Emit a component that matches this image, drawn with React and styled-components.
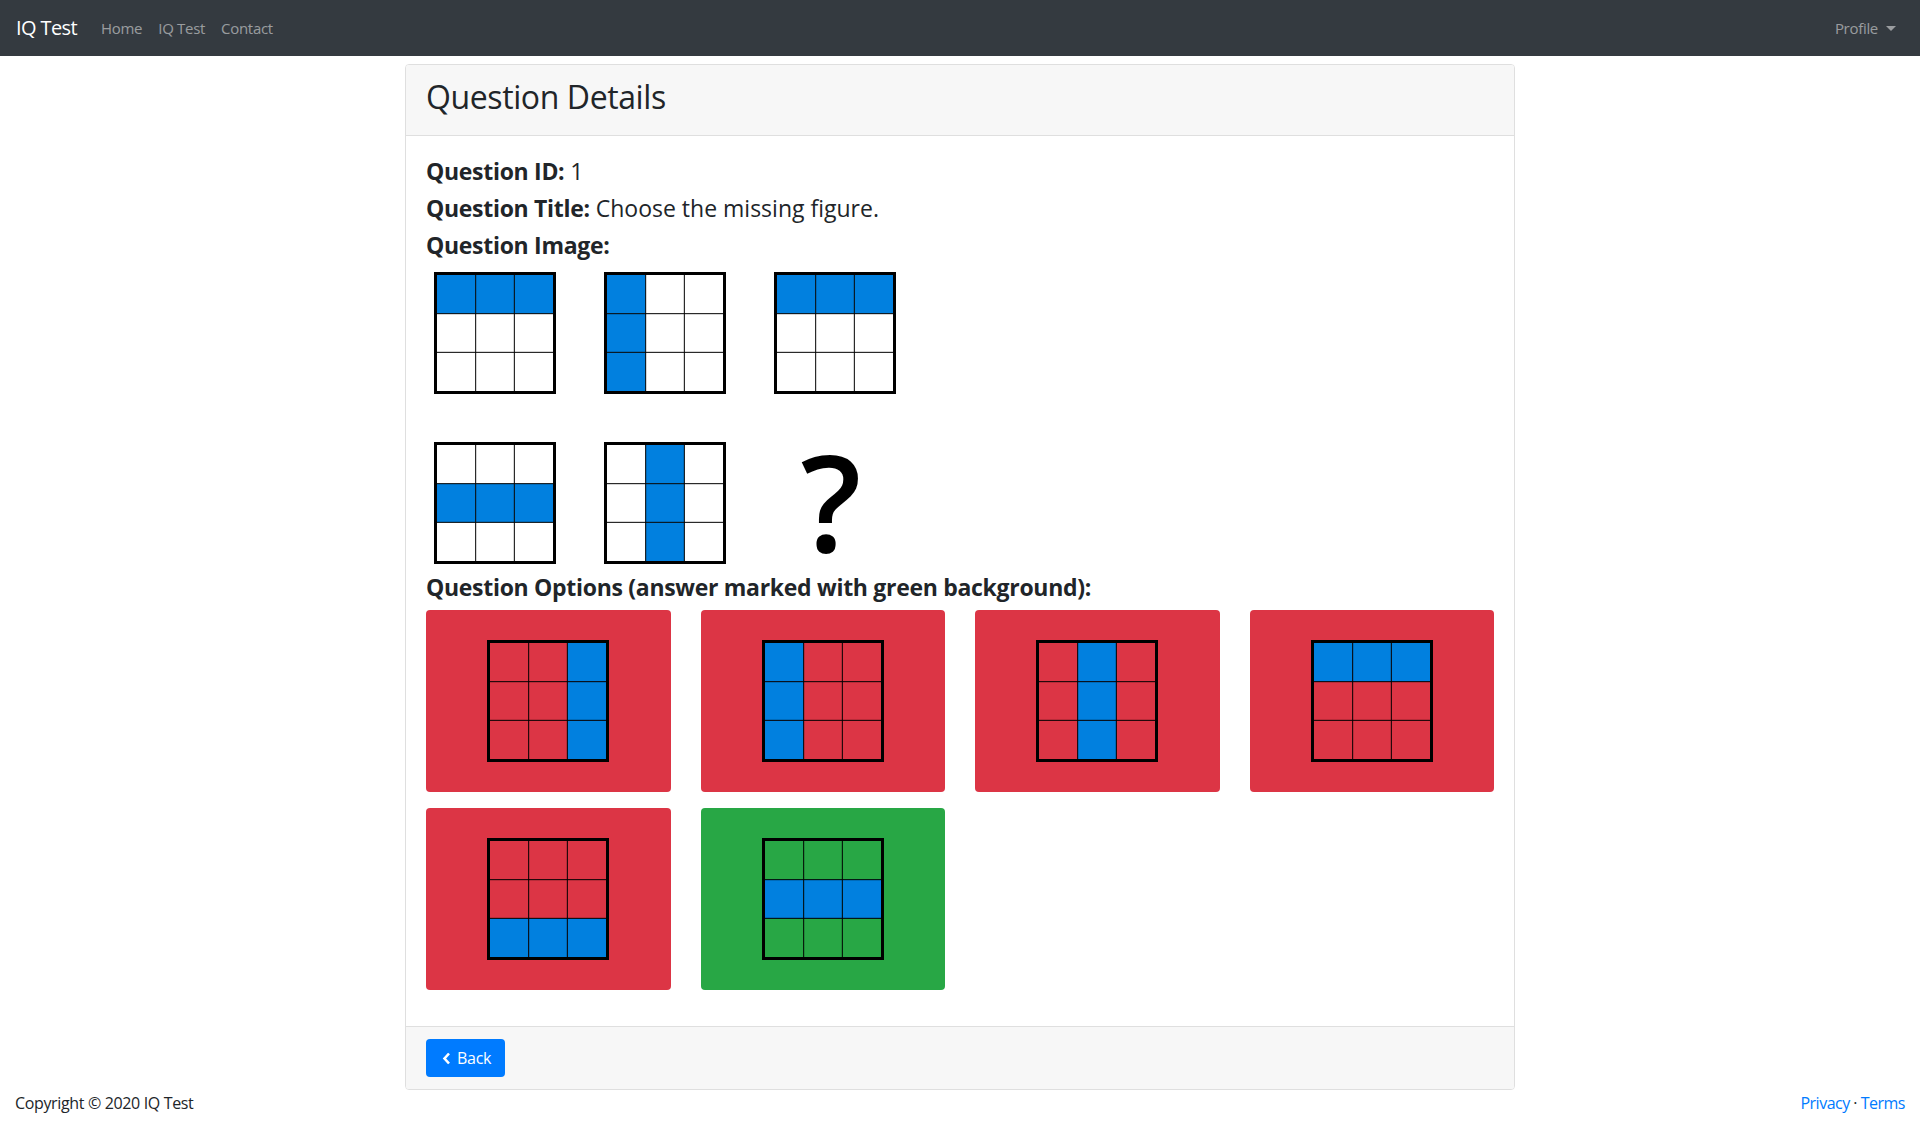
import React from "react";
import styled, { createGlobalStyle } from "styled-components";

const FONT = `"Open Sans", "Noto Sans", "Liberation Sans", sans-serif`;
const BLUE_CELL = "#0180df";

const GlobalStyle = createGlobalStyle`
  html, body {
    margin: 0;
    padding: 0;
    background: #fff;
  }
  body {
    font-family: ${FONT};
    font-size: 16px;
    line-height: 1.5;
    color: #212529;
  }
  * {
    box-sizing: border-box;
  }
`;

const Navbar = styled.nav`
  height: 56px;
  background: #343a40;
  display: flex;
  align-items: center;
  padding: 0 16px;
`;

const Brand = styled.a`
  font-size: 20px;
  color: #fff;
  margin-right: 16px;
  text-decoration: none;
  letter-spacing: -0.6px;
`;

const NavList = styled.div`
  display: flex;
  flex: 1;
`;

const NavLink = styled.a`
  color: rgba(255, 255, 255, 0.5);
  padding: 8px;
  font-size: 15px;
  letter-spacing: -0.3px;
  text-decoration: none;
`;

const Dropdown = styled(NavLink)`
  padding-right: 8px;
  &::after {
    content: "";
    display: inline-block;
    margin-left: 8px;
    vertical-align: 3px;
    border-top: 5px solid rgba(255, 255, 255, 0.5);
    border-left: 5px solid transparent;
    border-right: 5px solid transparent;
  }
`;

const Container = styled.main`
  width: 1140px;
  margin: 8px auto 0;
  padding: 0 15px;
`;

const Card = styled.section`
  border: 1px solid #dfdfdf;
  border-radius: 4px;
  overflow: hidden;
`;

const CardHeader = styled.header`
  background: #f7f7f7;
  border-bottom: 1px solid #dfdfdf;
  padding: 13px 20px 11px;
`;

const Title = styled.h2`
  margin: 0 0 8px;
  font-size: 32px;
  font-weight: 400;
  line-height: 38px;
  letter-spacing: -0.4px;
`;

const CardBody = styled.div`
  padding: 21px 20px 20px;
`;

const InfoLine = styled.h4`
  margin: 0 0 8px;
  font-size: 23px;
  font-weight: 400;
  line-height: 28.8px;
  strong {
    font-weight: 700;
    letter-spacing: -0.3px;
  }
`;

const FigureSet = styled.div`
  display: flex;
  flex-direction: column;
  gap: 48px;
  padding: 5px 8px 9px;
`;

const FigureRow = styled.div`
  display: flex;
  gap: 48px;
`;

const Missing = styled.div`
  width: 122px;
  height: 122px;
  display: flex;
  align-items: center;
  justify-content: center;
  padding: 0 8px 6px 0;
  span {
    font-family: "Open Sans", "Liberation Sans", sans-serif;
    font-weight: 600;
    font-size: 134px;
    line-height: 110px;
    color: #000;
  }
`;

const Options = styled.div`
  display: grid;
  grid-template-columns: repeat(4, 1fr);
  column-gap: 30px;
`;

const Option = styled.div`
  background: ${(p) => (p.$correct ? "#28a745" : "#dc3545")};
  border-radius: 4px;
  padding: 30px;
  margin-bottom: 16px;
  display: flex;
  justify-content: center;
`;

const CardFooter = styled.footer`
  background: #f7f7f7;
  border-top: 1px solid #dfdfdf;
  padding: 12px 20px;
`;

const Button = styled.a`
  display: inline-flex;
  align-items: center;
  gap: 6px;
  height: 38px;
  padding: 0 14px 0 16px;
  background: #007bff;
  color: #fff;
  border-radius: 4px;
  font-size: 16px;
  letter-spacing: -0.3px;
  text-decoration: none;
`;

const PageFooter = styled.footer`
  display: flex;
  justify-content: space-between;
  align-items: center;
  padding: 0 15px;
  height: 24px;
  margin-top: 1px;
  font-size: 16px;
  letter-spacing: -0.35px;
  a {
    color: #007bff;
    text-decoration: none;
  }
`;

const FooterLinks = styled.span`
  letter-spacing: -0.5px;
`;

// 3x3 grid picture, transparent where a cell is not filled
function Figure({ cells }) {
  const step = 116 / 3;
  return (
    <svg width="122" height="122" viewBox="0 0 122 122">
      {cells.map((on, i) =>
        on ? (
          <rect
            key={i}
            x={3 + (i % 3) * step}
            y={3 + Math.floor(i / 3) * step}
            width={step}
            height={step}
            fill={BLUE_CELL}
          />
        ) : null
      )}
      {[1, 2].map((k) => (
        <g key={k}>
          <rect x={3 + k * step - 0.5} y="3" width="1" height="116" fill="#000" />
          <rect x="3" y={3 + k * step - 0.5} width="116" height="1" fill="#000" />
        </g>
      ))}
      <rect x="1.5" y="1.5" width="119" height="119" fill="none" stroke="#000" strokeWidth="3" />
    </svg>
  );
}

const ROW_TOP = [1, 1, 1, 0, 0, 0, 0, 0, 0];
const ROW_MID = [0, 0, 0, 1, 1, 1, 0, 0, 0];
const ROW_BOT = [0, 0, 0, 0, 0, 0, 1, 1, 1];
const COL_LEFT = [1, 0, 0, 1, 0, 0, 1, 0, 0];
const COL_MID = [0, 1, 0, 0, 1, 0, 0, 1, 0];
const COL_RIGHT = [0, 0, 1, 0, 0, 1, 0, 0, 1];

const options = [
  { cells: COL_RIGHT },
  { cells: COL_LEFT },
  { cells: COL_MID },
  { cells: ROW_TOP },
  { cells: ROW_BOT },
  { cells: ROW_MID, correct: true },
];

export default function App() {
  return (
    <>
      <GlobalStyle />
      <Navbar>
        <Brand href="#">IQ Test</Brand>
        <NavList>
          <NavLink href="#">Home</NavLink>
          <NavLink href="#">IQ Test</NavLink>
          <NavLink href="#">Contact</NavLink>
        </NavList>
        <Dropdown href="#">Profile</Dropdown>
      </Navbar>

      <Container>
        <Card>
          <CardHeader>
            <Title>Question Details</Title>
          </CardHeader>
          <CardBody>
            <InfoLine>
              <strong>Question ID:</strong> 1
            </InfoLine>
            <InfoLine>
              <strong>Question Title:</strong> Choose the missing figure.
            </InfoLine>
            <InfoLine>
              <strong>Question Image:</strong>
            </InfoLine>
            <FigureSet>
              <FigureRow>
                <Figure cells={ROW_TOP} />
                <Figure cells={COL_LEFT} />
                <Figure cells={ROW_TOP} />
              </FigureRow>
              <FigureRow>
                <Figure cells={ROW_MID} />
                <Figure cells={COL_MID} />
                <Missing>
                  <span>?</span>
                </Missing>
              </FigureRow>
            </FigureSet>
            <InfoLine>
              <strong>Question Options (answer marked with green background):</strong>
            </InfoLine>
            <Options>
              {options.map((o, i) => (
                <Option key={i} $correct={o.correct}>
                  <Figure cells={o.cells} />
                </Option>
              ))}
            </Options>
          </CardBody>
          <CardFooter>
            <Button href="#">
              <svg width="9" height="13" viewBox="0 0 9 13">
                <polyline
                  points="7,1.5 2.5,6.5 7,11.5"
                  fill="none"
                  stroke="#fff"
                  strokeWidth="2.6"
                />
              </svg>
              Back
            </Button>
          </CardFooter>
        </Card>
      </Container>

      <PageFooter>
        <span>Copyright © 2020 IQ Test</span>
        <FooterLinks>
          <a href="#">Privacy</a> · <a href="#">Terms</a>
        </FooterLinks>
      </PageFooter>
    </>
  );
}
